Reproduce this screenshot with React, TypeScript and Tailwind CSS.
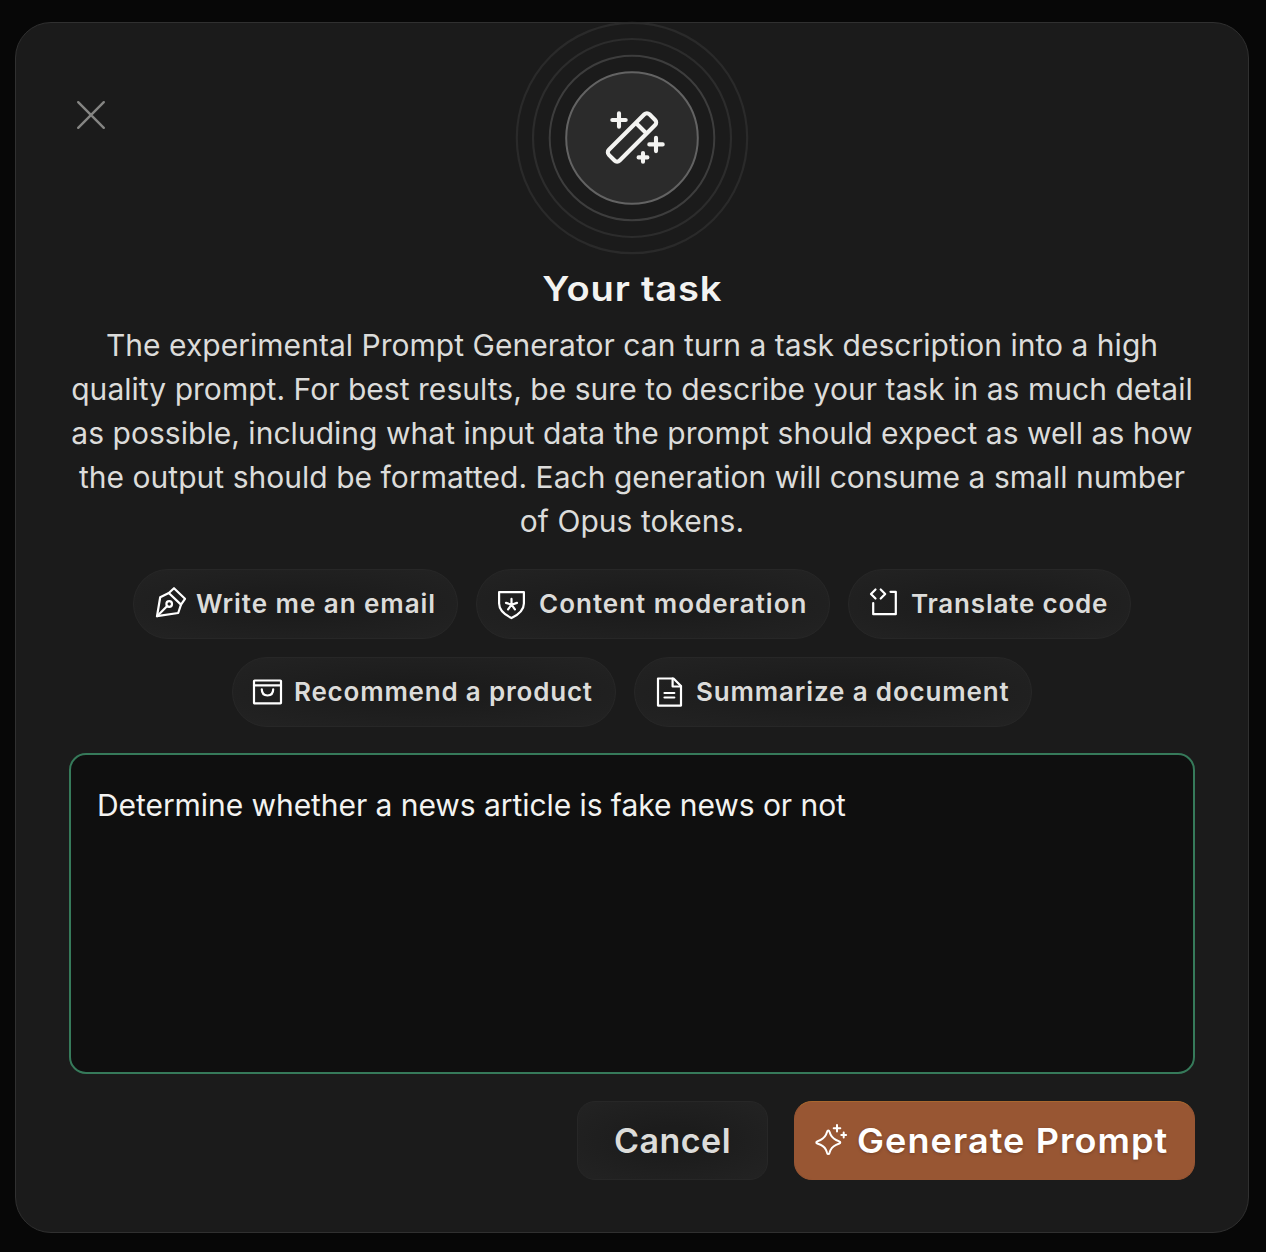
import React from "react";
import type { ReactNode } from "react";

function WandBadge() {
  return (
    <svg width="234" height="234" viewBox="515 20.3 234 234" fill="none" aria-hidden="true">
      <circle cx="632" cy="137.3" r="115.2" stroke="#2a2a2a" strokeWidth="2.2" />
      <circle cx="632" cy="137.3" r="99" stroke="#2c2c2c" strokeWidth="2.2" />
      <circle cx="632" cy="137.3" r="82.3" stroke="#3d3d3d" strokeWidth="2" />
      <circle cx="632" cy="137.3" r="65.8" fill="#2b2b2b" stroke="#636363" strokeWidth="2" />
      <g stroke="#f3f3f1" strokeWidth="4.1" strokeLinecap="round" strokeLinejoin="round">
        <rect x="-28.7" y="-7.6" width="57.4" height="15.2" rx="3.6" transform="translate(632 136.7) rotate(-45)" />
        <path d="M637.2 123.5l8.8 8.8" />
        <path d="M619 112.6v13.4M612.3 119.3h13.4" />
        <path d="M656 137v13.4M649.3 143.7h13.4" />
        <path d="M643 152.3v8.8M638.6 156.7h8.8" />
      </g>
    </svg>
  );
}

function ChipIcon({ children, className }: { children: ReactNode; className: string }) {
  return (
    <svg
      className={`shrink-0 ${className}`}
      width="32"
      height="32"
      viewBox="0 0 32 32"
      fill="none"
      stroke="#ffffff"
      strokeWidth="2.2"
      strokeLinecap="round"
      strokeLinejoin="round"
      aria-hidden="true"
    >
      {children}
    </svg>
  );
}

const nib = (
  <ChipIcon className="ml-px -mt-1">
    <path d="M2 30.2L5.2 11.2 13.8 7 26 18.6 23.2 27z" />
    <path d="M13.8 7l5.2-4.8L30 12.8l-4 5.8M2 30.2l10.2-10.2" />
    <circle cx="14.2" cy="18" r="2.8" />
  </ChipIcon>
);

const shield = (
  <ChipIcon className="-ml-px">
    <path d="M3.1 4.1h24.8v11.4c0 6.2-4.3 10.6-12.4 14.6C7.4 26.1 3.1 21.7 3.1 15.5z" />
    <path d="M15.5 16.7v-5.8M15.5 16.7l5.500-1.800M15.5 16.7l3.400 4.700M15.5 16.7l-3.400 4.700M15.5 16.7l-5.500-1.800" />
  </ChipIcon>
);

const code = (
  <ChipIcon className="-ml-px -mt-0.5">
    <path d="M7.5 2.5L3 7l4.500 4.500M12.7 2.5L17.2 7l-4.500 4.500M22.5 4.8h5.300v22.400H5.2V16" />
  </ChipIcon>
);

const bag = (
  <ChipIcon className="-ml-px">
    <rect x="2" y="4.5" width="27" height="22.8" rx="0.6" />
    <path d="M2 9.300h27M9.800 13.300c0 4 2.300 6.200 5.700 6.200s5.700-2.200 5.700-6.200" />
  </ChipIcon>
);

const page = (
  <ChipIcon className="-ml-px">
    <path d="M4 2.500h15.500l7.500 7.500v19.600H4z" />
    <path d="M18.600 2.500V10.500H27M10.500 17h9.800M10.500 21.500h9.800" />
  </ChipIcon>
);

function Chip({ icon, label, className }: { icon: ReactNode; label: string; className: string }) {
  return (
    <button
      className={`flex h-[70px] items-center rounded-full border border-[#272727] bg-[radial-gradient(ellipse_at_center,#1c1c1c_25%,#232323_100%)] pl-5 text-[26px] font-semibold whitespace-nowrap text-[#dcdcda] ${className}`}
    >
      {icon}
      <span className="-mt-0.5">{label}</span>
    </button>
  );
}

export default function App() {
  return (
    <main className="h-[1252px] w-full bg-[#070707] pt-[22px] pl-[15px] font-['Inter',sans-serif]">
      <section className="relative flex h-[1211px] w-[1234px] flex-col items-center rounded-[36px] border border-[#303030] bg-[#1b1b1b] px-[53px]">
        <button aria-label="Close" className="absolute top-[77px] left-[60px]">
          <svg width="30" height="30" viewBox="0 0 30 30" stroke="#858583" strokeWidth="2.4" strokeLinecap="round">
            <path d="M2.2 2.2l25.6 25.6M27.8 2.2L2.2 27.8" />
          </svg>
        </button>

        <div className="-mt-[2px] h-[234px]">
          <WandBadge />
        </div>

        <h1 className="mt-3 h-11 scale-x-[1.12] text-[34px] leading-[44px] font-semibold tracking-[0.7px] text-[#f3f3f1]">
          Your task
        </h1>

        <p className="mt-3 text-center text-[30px] leading-[44px] tracking-[0.03px] whitespace-nowrap text-[#dcdcda]">
          The experimental Prompt Generator can turn a task description into a high
          <br />
          quality prompt. For best results, be sure to describe your task in as much detail
          <br />
          as possible, including what input data the prompt should expect as well as how
          <br />
          the output should be formatted. Each generation will consume a small number
          <br />
          of Opus tokens.
        </p>

        <div className="mt-[26px] flex w-full flex-wrap justify-center gap-[18px]">
          <Chip icon={nib} label="Write me an email" className="w-[325px] gap-[9px] tracking-[0.95px]" />
          <Chip icon={shield} label="Content moderation" className="w-[354px] gap-[11px] tracking-[1px]" />
          <Chip icon={code} label="Translate code" className="w-[283px] gap-[11px] tracking-[0.8px]" />
          <Chip icon={bag} label="Recommend a product" className="w-[384px] gap-[10px] tracking-[0.8px]" />
          <Chip icon={page} label="Summarize a document" className="w-[398px] gap-[10px] tracking-[0.85px]" />
        </div>

        <textarea
          className="mt-[26px] h-[321px] w-full shrink-0 resize-none rounded-[17px] border-2 border-[#367a5a] bg-[#0f0f0f] px-[26px] pt-7 text-[30px] leading-[44px] tracking-[-0.06px] text-[#f3f3f1] outline-none"
          defaultValue="Determine whether a news article is fake news or not"
        />

        <div className="mt-[27px] flex w-full justify-end gap-[26px]">
          <button className="h-[79px] w-[191px] rounded-[18px] border border-[#272727] bg-[radial-gradient(ellipse_at_center,#1c1c1c_25%,#232323_100%)] text-[34px] font-semibold tracking-[0.5px] text-[#dcdcda]">
            Cancel
          </button>
          <button className="flex h-[79px] w-[401px] items-center gap-[9px] rounded-[18px] border border-[#985633] border-t-[#a9672f] bg-[#985633] pl-[19px] text-[34px] font-semibold tracking-[1px] whitespace-nowrap text-white text-shadow-[0_1px_3px_rgb(0_0_0/0.25)]">
            <svg className="-mt-0.5 shrink-0" width="34" height="34" viewBox="0 0 34 34" fill="none" stroke="#ffffff" strokeWidth="2" strokeLinecap="round" strokeLinejoin="round">
              <path d="M14.3 7.6c-.7 0-1 .5-1.300 1.500-1.100 4.200-2.300 6-6.500 7.900l-3.200 1.400c-1.300.6-1.300 1.600 0 2.100l3.200 1.300c4.200 1.800 5.400 3.600 6.500 7.800.3 1 .6 1.500 1.300 1.500s1-.5 1.300-1.500c1.100-4.200 2.300-6 6.500-7.800l3.200-1.300c1.300-.5 1.300-1.500 0-2.100L22.100 17c-4.200-1.900-5.400-3.700-6.500-7.900-.3-1-.6-1.500-1.300-1.500z" />
              <path d="M23 2v6.600M19.700 5.300h6.600M29.700 9.600v4.800M27.300 12h4.800" />
            </svg>
            <span className="origin-left scale-x-[1.06]">Generate Prompt</span>
          </button>
        </div>
      </section>
    </main>
  );
}
